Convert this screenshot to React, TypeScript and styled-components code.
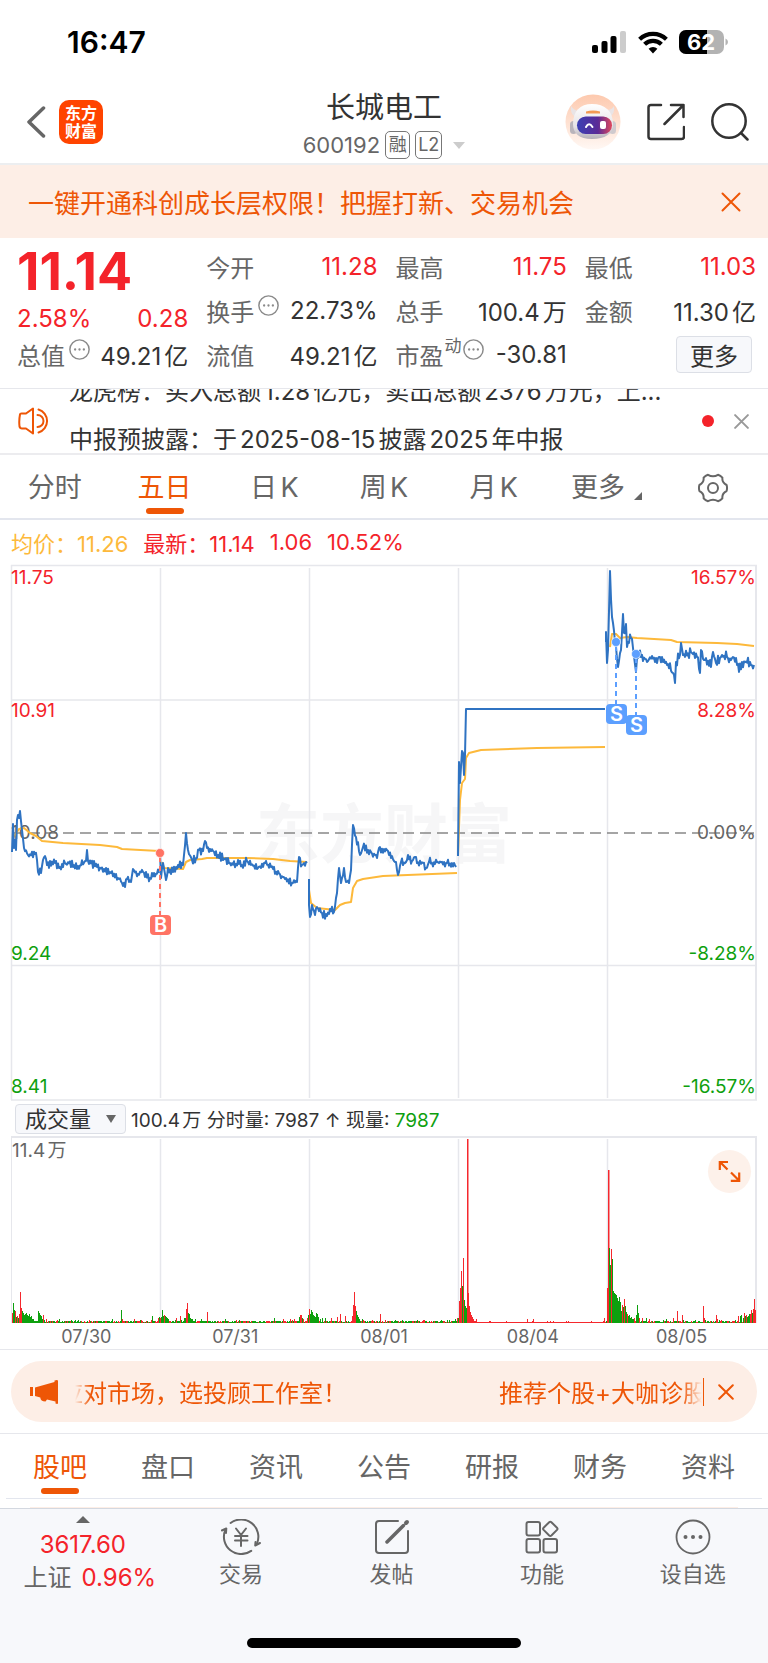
import React from 'react';
import styled, { createGlobalStyle } from 'styled-components';

const RED = '#f4232a';
const GREEN = '#0ea00e';
const ORANGE = '#ee5606';
const PEACH = '#fdeee6';
const INK = '#333333';
const GREY = '#666666';
const LINE = '#e6e7ec';
const BLUE = '#2f73c2';
const YELLOW = '#fdb93b';

const GlobalStyle = createGlobalStyle`
  * { box-sizing: border-box; }
  body {
    margin: 0;
    background: #fff;
    color: ${INK};
    font-family: Inter, "Noto Sans CJK SC", sans-serif;
    font-size: 24px;
    text-autospace: normal;
  }
  button, select { font: inherit; color: inherit; }
  button {
    display: flex;
    align-items: center;
    justify-content: center;
    padding: 0;
    border: 0;
    background: none;
    cursor: pointer;
  }
  a { color: inherit; text-decoration: none; }
  svg { display: block; flex: none; }
`;

const Page = styled.div`
  display: flex;
  flex-direction: column;
  min-height: 100vh;
`;

/* ---------- status bar and header ---------- */

const StatusBar = styled.div`
  display: flex;
  align-items: center;
  justify-content: space-between;
  height: 80px;
  padding: 4px 39px 0 67px;
`;

const Clock = styled.time`
  color: #000;
  font-size: 30px;
  font-weight: 600;
`;

const StatusIcons = styled.div`
  display: flex;
  align-items: center;
  gap: 11px;
`;

const Header = styled.header`
  display: grid;
  grid-template-columns: 1fr auto 1fr;
  align-items: center;
  height: 85px;
  padding: 0 19px;
  border-bottom: 2px solid #eceef0;
`;

const HeaderSide = styled.div<{ $end?: boolean }>`
  display: flex;
  align-items: center;
  justify-content: ${(p) => (p.$end ? 'flex-end' : 'flex-start')};
  gap: ${(p) => (p.$end ? '26px' : '13px')};
  padding-left: ${(p) => (p.$end ? '0' : '7px')};
`;

const Logo = styled.a`
  display: grid;
  place-content: center;
  width: 44px;
  height: 44px;
  border-radius: 10px;
  background: #ff4400;
  color: #fff;
  font-size: 16px;
  font-weight: 700;
  line-height: 18px;
  text-align: center;
`;

const TitleBlock = styled.div`
  display: flex;
  flex-direction: column;
  align-items: center;
  padding-top: 7px;
`;

const Title = styled.h1`
  margin: 0;
  font-size: 29px;
  font-weight: 400;
  line-height: 40px;
`;

const CodeLine = styled.div`
  display: flex;
  align-items: center;
  gap: 5px;
  height: 35px;
  color: ${GREY};
  font-size: 22px;
`;

const Tag = styled.span`
  display: grid;
  place-content: center;
  min-width: 25px;
  height: 28px;
  padding: 0 2px;
  border: 1px solid #777;
  border-radius: 5px;
  font-size: 18px;
  line-height: 26px;
`;

const CodeArrow = styled.span`
  width: 0;
  margin-left: 6px;
  border: 6px solid transparent;
  border-top: 7px solid #ccc;
  border-bottom: 0;
`;

/* ---------- banner ---------- */

const Banner = styled.section`
  display: flex;
  align-items: center;
  justify-content: space-between;
  height: 73px;
  padding: 0 27px 0 28px;
  background: ${PEACH};
  color: ${ORANGE};
  font-size: 26px;
`;

/* ---------- quote figures ---------- */

const Quote = styled.section`
  display: grid;
  grid-template-columns: repeat(4, 1fr);
  gap: 18px;
  padding: 6px 12px 12px 17px;
  border-bottom: 1px solid ${LINE};
`;

const QuoteColumn = styled.div`
  display: flex;
  flex-direction: column;
`;

const Price = styled.strong`
  height: 60px;
  color: ${RED};
  font-size: 52px;
  font-weight: 700;
  line-height: 56px;
`;

const Change = styled.div`
  display: flex;
  align-items: center;
  justify-content: space-between;
  height: 28px;
  color: ${RED};
`;

const StatRow = styled.div`
  display: flex;
  align-items: center;
  height: 44px;
  white-space: nowrap;
`;

const StatLabel = styled.span`
  color: ${GREY};
`;

const StatValue = styled.span<{ $up?: boolean }>`
  margin-left: auto;
  color: ${(p) => (p.$up ? RED : INK)};
`;

const Sup = styled.sup`
  align-self: flex-start;
  margin: 4px 1px 0;
  color: ${GREY};
  font-size: 17px;
  line-height: 20px;
`;

const Hint = styled.button`
  align-self: flex-start;
  margin: 7px 0 0 4px;
  ${Sup} + & { margin-left: 0; }
`;

const MoreButton = styled.button`
  width: 76px;
  height: 37px;
  margin: 0 4px 0 auto;
  border: 1px solid #dcdfe6;
  border-radius: 4px;
  background: #f7f8fb;
`;

/* ---------- news ticker ---------- */

const News = styled.section`
  display: flex;
  align-items: center;
  height: 66px;
  padding: 0 19px 0 18px;
  border-bottom: 2px solid #ececef;
`;

const NewsWindow = styled.div`
  flex: 1;
  height: 64px;
  margin: 0 18px;
  overflow: hidden;
`;

const NewsList = styled.div`
  margin-top: -21px;
`;

const NewsItem = styled.a`
  display: block;
  line-height: 48px;
  white-space: nowrap;
`;

const Dot = styled.span`
  width: 12px;
  height: 12px;
  margin-right: 20px;
  border-radius: 50%;
  background: ${RED};
`;

/* ---------- tabs ---------- */

const Tabs = styled.nav<{ $inset?: boolean }>`
  display: grid;
  grid-template-columns: repeat(7, 1fr);
  height: 65px;
  margin: 0 ${(p) => (p.$inset ? '6px' : '0')};
  border-bottom: ${(p) => (p.$inset ? '1px' : '2px')} solid #e3e6ee;
`;

const Tab = styled.button<{ $active?: boolean }>`
  position: relative;
  padding-top: 3px;
  color: ${(p) => (p.$active ? ORANGE : GREY)};
  font-size: 27px;
  line-height: 40px;
  &::after {
    content: "";
    display: ${(p) => (p.$active ? 'block' : 'none')};
    position: absolute;
    bottom: 4px;
    left: 50%;
    width: 38px;
    height: 6px;
    margin-left: -19px;
    border-radius: 3px;
    background: ${ORANGE};
  }
`;

const Corner = styled.span`
  align-self: flex-end;
  margin: 0 -6px 18px 9px;
  border-left: 8px solid transparent;
  border-bottom: 8px solid ${GREY};
`;

/* ---------- charts ---------- */

const Legend = styled.div`
  display: flex;
  align-items: center;
  gap: 15px;
  height: 44px;
  padding: 0 11px;
  color: ${RED};
  font-size: 22px;
`;

const Average = styled.span`
  color: ${YELLOW};
`;

const ChartSvg = styled.svg`
  width: 100%;
  height: auto;
  font-size: 19px;
`;

const VolumeBar = styled.div`
  display: flex;
  align-items: center;
  gap: 5px;
  height: 35px;
  padding-left: 15px;
  font-size: 19px;
  white-space: nowrap;
`;

const SelectBox = styled.label`
  position: relative;
  &::after {
    content: "";
    position: absolute;
    top: 11px;
    right: 10px;
    border: 5px solid transparent;
    border-top: 8px solid ${GREY};
    border-bottom: 0;
    pointer-events: none;
  }
`;

const Select = styled.select`
  display: block;
  appearance: none;
  width: 111px;
  height: 30px;
  padding: 0 0 0 9px;
  border: 1px solid #dcdfe6;
  border-radius: 4px;
  background: #f7f8fb;
  font-size: 22px;
  line-height: 28px;
`;

const Down = styled.span`
  color: ${GREEN};
`;

const VolumeChart = styled.div`
  position: relative;
`;

const Expand = styled.button`
  position: absolute;
  top: 14px;
  right: 17px;
  width: 43px;
  height: 43px;
  border-radius: 50%;
  background: #fdf1ea;
`;

const Dates = styled.div`
  display: grid;
  grid-template-columns: repeat(5, 1fr);
  height: 27px;
  padding: 0 12px;
  border-bottom: 1px solid ${LINE};
  color: ${GREY};
  font-size: 18px;
  line-height: 28px;
  text-align: center;
`;

/* ---------- promotion strip ---------- */

const PromoWrap = styled.section`
  padding: 11px;
  border-bottom: 1px solid ${LINE};
`;

const Promo = styled.div`
  display: flex;
  align-items: center;
  height: 61px;
  padding: 0 23px 0 19px;
  border-radius: 31px;
  background: ${PEACH};
  color: ${ORANGE};
`;

const Marquee = styled.div`
  display: flex;
  flex: 1;
  justify-content: space-between;
  margin-left: 17px;
  overflow: hidden;
  white-space: nowrap;
  mask-image: linear-gradient(90deg, transparent, #000 16px, #000 calc(100% - 20px), transparent);
`;

const MarqueeItem = styled.a<{ $edge: 'start' | 'end' }>`
  margin-left: ${(p) => (p.$edge === 'start' ? '-16px' : '0')};
  margin-right: ${(p) => (p.$edge === 'end' ? '-5px' : '0')};
`;

const Divider = styled.span`
  width: 1px;
  height: 28px;
  margin: 0 14px 0 1px;
  background: ${ORANGE};
`;

/* ---------- bottom bar ---------- */

const FeedPeek = styled.div`
  height: 1px;
  margin: 8px 30px 0;
  background: ${PEACH};
`;

const BottomBar = styled.footer`
  flex: 1;
  border-top: 1px solid #d3d8e0;
  background: #f7f8fb;
`;

const BottomNav = styled.nav`
  display: grid;
  grid-template-columns: 11fr repeat(4, 10fr);
  height: 129px;
`;

const NavItem = styled.a`
  display: flex;
  flex-direction: column;
  align-items: center;
  padding-top: 10px;
  color: ${GREY};
  font-size: 22px;
  line-height: 32px;
`;

const NavLabel = styled.span`
  margin-top: 3px;
`;

const IndexItem = styled.a`
  display: flex;
  flex-direction: column;
  align-items: center;
  padding-top: 7px;
  color: ${GREY};
  line-height: 33px;
`;

const IndexArrow = styled.span`
  width: 0;
  margin-bottom: 5px;
  border: 7px solid transparent;
  border-bottom: 7px solid ${GREY};
  border-top: 0;
`;

const IndexLine = styled.span`
  display: flex;
  gap: 10px;
  padding-left: 14px;
`;

const Rise = styled.span`
  color: ${RED};
`;

const HomeIndicator = styled.div`
  width: 274px;
  height: 10px;
  margin: 0 auto 16px;
  border-radius: 5px;
  background: #000;
`;

/* ---------- icons ---------- */

const Cross = ({ size, color }: { size: number; color: string }) => (
  <svg width={size} height={size} viewBox="0 0 20 20" stroke={color} strokeWidth={(2 * 20) / size} strokeLinecap="round">
    <path d="M1.5 1.5 18.5 18.5M18.5 1.5 1.5 18.5" />
  </svg>
);

const Signal = () => (
  <svg width="35" height="23" viewBox="0 0 35 23">
    <rect x="0" y="14" width="6" height="8" rx="2" />
    <rect x="9.500" y="10" width="6" height="12" rx="2" />
    <rect x="18.500" y="5" width="6" height="17" rx="2" />
    <rect x="28" y="0" width="6" height="22" rx="2" fill="#ccc" />
  </svg>
);

const Wifi = () => (
  <svg width="30" height="23" viewBox="0 0 30 23" fill="none" stroke="#000" strokeWidth="4.200">
    <path d="M1.600 8.200A19.500 19.500 0 0 1 28.400 8.200" />
    <path d="M6.600 13.300A12 12 0 0 1 23.400 13.300" />
    <path d="M15 22.500 10.600 17.800A6.500 6.500 0 0 1 19.400 17.800Z" fill="#000" stroke="none" />
  </svg>
);

const Battery = () => (
  <svg width="50" height="25" viewBox="0 0 50 25" role="img" aria-label="62%">
    <rect x="0" y="0" width="45" height="24" rx="7" fill="#b3b3b3" />
    <path d="M7 0H28V24H7A7 7 0 0 1 0 17V7A7 7 0 0 1 7 0Z" />
    <path d="M46.500 8.500Q49 9.500 49 12T46.500 15.500Z" fill="#b3b3b3" />
    <text x="22" y="20" fill="#fff" fontSize="22" fontWeight="700" textAnchor="middle">62</text>
  </svg>
);

const Back = () => (
  <svg width="20" height="32" viewBox="0 0 20 32" fill="none" stroke={GREY} strokeWidth="3.500" strokeLinecap="round" strokeLinejoin="round">
    <path d="M17.500 2 3 16 17.500 30" />
  </svg>
);

const Robot = () => (
  <svg width="56" height="56" viewBox="0 0 56 56">
    <defs>
      <linearGradient id="halo" x2="0" y2="1">
        <stop offset="0" stopColor="#fdc9ae" />
        <stop offset="1" stopColor="#fff8f4" />
      </linearGradient>
      <linearGradient id="visor">
        <stop offset="0" stopColor="#3b40b4" />
        <stop offset="0.600" stopColor="#5b2a96" />
        <stop offset="1" stopColor="#e0485c" />
      </linearGradient>
      <linearGradient id="shell" x2="0" y2="1">
        <stop offset="0" stopColor="#ffffff" />
        <stop offset="0.650" stopColor="#e6e3e6" />
        <stop offset="1" stopColor="#b5b0b8" />
      </linearGradient>
    </defs>
    <circle cx="28" cy="28" r="27.500" fill="url(#halo)" />
    <path d="M6 12C5 18 8 23 13 24L18 16C12 18 9 16 6 12ZM49 12C50 18 47 23 42 24L37 15C43 17 47 16 49 12Z" fill="#e9e4e6" />
    <rect x="5" y="27" width="7" height="13" rx="3.500" fill="#b9b4bb" />
    <rect x="44" y="27" width="7" height="13" rx="3.500" fill="#cfcace" />
    <path d="M27 10C40 10 48 17 48 30C48 40 40 45 27 45C14 45 8 39 8 30C8 17 15 10 27 10Z" fill="url(#shell)" />
    <path d="M21 17.500Q28 15.500 35 17.500V19.500H21Z" fill="#f39a55" />
    <rect x="12" y="22.500" width="35" height="17.500" rx="8.700" fill="url(#visor)" />
    <path d="M21 33Q24 27.500 27.500 33" fill="none" stroke="#fff" strokeWidth="2" strokeLinecap="round" />
    <rect x="35" y="27" width="6" height="8" rx="2" fill="#fff" />
  </svg>
);

const Share = () => (
  <svg width="38" height="38" viewBox="0 0 38 38" fill="none" stroke={INK} strokeWidth="2.500" strokeLinecap="round" strokeLinejoin="round">
    <path d="M14 2H4Q1.500 2 1.500 4.500V33.500Q1.500 36 4 36H34.500Q37 36 37 33.500V24M24 2H36.500V14M36.500 2 17.500 21" />
  </svg>
);

const Search = () => (
  <svg width="38" height="38" viewBox="0 0 38 38" fill="none" stroke={INK} strokeWidth="2.500" strokeLinecap="round">
    <circle cx="18" cy="18" r="16.700" />
    <path d="M30 30 36.500 36.500" />
  </svg>
);

const Ellipsis = ({ size, width, color = GREY }: { size: number; width: number; color?: string }) => (
  <svg width={size} height={size} viewBox="0 0 36 36" fill={color}>
    <circle cx="18" cy="18" r="16.500" fill="none" stroke={color} strokeWidth={width} />
    <circle cx="10.500" cy="18" r="2" />
    <circle cx="18" cy="18" r="2" />
    <circle cx="25.500" cy="18" r="2" />
  </svg>
);

const Speaker = () => (
  <svg width="33" height="28" viewBox="0 0 33 28" fill="none" stroke={ORANGE} strokeWidth="2" strokeLinecap="round" strokeLinejoin="round">
    <path d="M2 7.500Q2 6.500 3.500 6.500H8L15 1.500V26.500L8 21.500H4Q2 21.500 1.500 19.500Q.8 13.500 2 7.500Z" />
    <path d="M20.500 2.500A12 12 0 0 1 20.500 25.500M19.500 8A6 6 0 0 1 19.500 20" />
  </svg>
);

const Gear = () => (
  <svg width="30" height="30" viewBox="0 0 30 30" fill="none" stroke={GREY} strokeWidth="2" strokeLinejoin="round">
    <path d="M10 1.800Q15 4.800 20 1.800Q22.500 2.600 24.400 4.700Q23.800 9.500 28.600 12Q29.500 15 28.600 18Q23.800 20.500 24.400 25.300Q22.500 27.400 20 28.200Q15 25.200 10 28.200Q7.500 27.400 5.600 25.300Q6.200 20.500 1.400 18Q.5 15 1.400 12Q6.200 9.500 5.600 4.700Q7.500 2.600 10 1.800Z" />
    <circle cx="15" cy="15" r="5" />
  </svg>
);

const ExpandArrows = () => (
  <svg width="23" height="23" viewBox="0 0 23 23" fill="none" stroke={ORANGE} strokeWidth="2.200">
    <path d="M1.800 10V2H10M2 2 9.500 9.500M21.200 12.500V20.800H12.800M21 20.500 13 12.500" />
  </svg>
);

const Megaphone = () => (
  <svg width="28" height="26" viewBox="0 0 28 26" fill={ORANGE}>
    <path d="M0 8H3V17H0ZM5 8.500 24.500 3V1.500Q28 .2 28 2V24Q28 25.500 25.500 24.500V22.500L17 20.500L15.500 22.500Q10.500 22.500 10.300 18.500L5 17Z" />
  </svg>
);

const Trade = () => (
  <svg width="40" height="36" viewBox="0 0 40 36" fill="none" stroke={GREY} strokeWidth="2" strokeLinecap="round" strokeLinejoin="round">
    <path d="M9.600 4A17.300 17.300 0 0 1 36 24.500M30.200 31.900A17.300 17.300 0 0 1 4.300 11" />
    <path d="M.8 11.500 5.300 9.500 5 14M34.500 23 34.200 26.500 39 24" />
    <path d="M15 9.500 20 16 25 9.500M14 17H26.500M14 21.500H26.500M20 16V27" />
  </svg>
);

const Post = () => (
  <svg width="36" height="36" viewBox="0 0 36 36" fill="none" stroke={GREY} strokeWidth="2" strokeLinecap="round">
    <path d="M24 2H5Q2 2 2 5V31Q2 34 5 34H31Q34 34 34 31V12" />
    <path d="M13 23 29.500 6.500" strokeWidth="3.500" />
    <path d="M32 4 33 3" strokeWidth="4" />
  </svg>
);

const Apps = () => (
  <svg width="36" height="36" viewBox="0 0 36 36" fill="none" stroke={GREY} strokeWidth="2" strokeLinejoin="round">
    <rect x="2.500" y="3" width="13.500" height="13.500" rx="2" />
    <rect x="2.500" y="20" width="13.500" height="13.500" rx="2" />
    <rect x="19.500" y="20" width="13.500" height="13.500" rx="2" />
    <path d="M25.200 3.200Q26.300 2.200 27.400 3.200L33 8.700Q34 9.800 33 10.900L27.400 16.500Q26.300 17.500 25.200 16.500L19.600 10.900Q18.600 9.800 19.600 8.700Z" />
  </svg>
);

/* ---------- chart data ---------- */

type Point = [number, number];

const priceDays: { jitter: number; points: Point[] }[] = [
  {
    jitter: 5,
    points: [[12, 852], [13, 824], [14, 848], [15, 840], [16, 850], [17, 820], [18, 815], [19, 818], [20, 811], [22, 830], [24, 848], [28, 855], [35, 854], [37, 860], [38, 872], [41, 873], [43, 860], [45, 856], [47, 865], [55, 863], [60, 867], [65, 863], [78, 866], [86, 861], [87, 850], [88, 861], [97, 867], [110, 872], [118, 878], [122, 883], [125, 887], [127, 879], [131, 882], [133, 869], [138, 874], [143, 872], [150, 878], [159, 873]],
  },
  {
    jitter: 5,
    points: [[160, 853], [161, 878], [163, 863], [166, 880], [168, 868], [173, 872], [178, 865], [183, 865], [186, 833], [188, 850], [192, 860], [197, 858], [199, 850], [203, 851], [205, 841], [207, 848], [213, 851], [218, 855], [230, 863], [242, 865], [247, 861], [258, 868], [265, 863], [273, 869], [283, 877], [293, 883], [297, 882], [299, 857], [302, 865], [307, 863]],
  },
  {
    jitter: 5,
    points: [[309, 879], [309, 905], [310, 917], [312, 905], [315, 915], [317, 907], [322, 913], [327, 916], [330, 909], [334, 912], [337, 893], [339, 868], [341, 883], [344, 868], [346, 882], [349, 883], [351, 870], [353, 825], [356, 837], [360, 855], [363, 847], [368, 850], [375, 855], [377, 858], [379, 848], [384, 849], [387, 850], [391, 858], [396, 862], [398, 875], [401, 862], [406, 862], [408, 855], [412, 861], [415, 857], [417, 863], [423, 863], [426, 868], [429, 862], [446, 863], [454, 863], [456, 867]],
  },
  {
    jitter: 0,
    points: [[458, 856], [459, 762], [460, 783], [462, 751], [463, 753], [464, 775], [465, 755], [466, 709], [605, 709]],
  },
  {
    jitter: 7,
    points: [[606, 642], [606, 632], [607, 663], [608, 650], [610, 571], [612, 617], [613, 623], [615, 642], [618, 667], [621, 650], [623, 614], [624, 633], [626, 624], [627, 647], [631, 638], [633, 648], [636, 672], [637, 658], [642, 655], [647, 662], [652, 656], [656, 658], [662, 657], [667, 665], [673, 673], [675, 683], [676, 662], [680, 655], [681, 643], [683, 655], [692, 653], [697, 657], [700, 673], [701, 650], [704, 660], [711, 667], [713, 652], [716, 663], [721, 657], [736, 658], [739, 672], [742, 662], [754, 665]],
  },
];

const averageDays: Point[][] = [
  [[13, 838], [19, 829], [24, 828], [30, 833], [36, 836], [42, 841], [63, 843], [100, 845], [117, 847], [122, 849], [159, 851]],
  [[162, 862], [164, 868], [183, 869], [186, 862], [190, 860], [202, 859], [207, 858], [247, 858], [273, 859], [290, 861], [307, 862]],
  [[309, 890], [311, 903], [317, 908], [335, 910], [340, 905], [345, 903], [351, 902], [353, 888], [357, 881], [363, 879], [383, 876], [457, 873]],
  [[458, 855], [460, 800], [462, 783], [465, 779], [466, 758], [469, 753], [481, 750], [537, 748], [605, 747]],
  [[610, 647], [612, 634], [616, 634], [620, 638], [627, 637], [637, 638], [671, 640], [677, 642], [717, 643], [737, 644], [754, 646]],
];

/* repeatable pseudo-random value between 0 and 1 */
const noise = (n: number) => {
  const v = Math.sin(n * 127.1) * 43758.5453;
  return v - Math.floor(v);
};

const toPath = (points: Point[]) => 'M' + points.map(([x, y]) => `${x} ${y.toFixed(1)}`).join('L');

/* fills the gaps between turning points with minute-by-minute jitter */
const withJitter = (points: Point[], jitter: number) => {
  if (!jitter) return points;
  const out: Point[] = [];
  points.forEach(([x, y], i) => {
    out.push([x, y]);
    const next = points[i + 1];
    if (!next) return;
    for (let px = x + 1; px < next[0]; px += 1) {
      const t = (px - x) / (next[0] - x);
      const sway = (noise(px) - 0.5) * jitter + (px % 2 ? 1 : -1) * jitter * 0.35;
      out.push([px, y + (next[1] - y) * t + sway]);
    }
  });
  return out;
};

type Bar = [number, number, 'r' | 'g'];

const spikes: Bar[] = [
  [12, 10, 'r'], [13, 20, 'g'], [14, 13, 'g'], [15, 12, 'r'], [16, 6, 'g'], [17, 7, 'r'], [18, 5, 'g'], [19, 9, 'r'], [20, 31, 'r'], [21, 15, 'r'], [22, 12, 'g'], [23, 10, 'g'], [24, 8, 'g'], [25, 9, 'g'], [26, 10, 'g'], [27, 8, 'g'], [28, 7, 'g'], [29, 9, 'g'], [30, 6, 'g'], [31, 7, 'g'], [32, 4, 'g'], [33, 4, 'g'],
  [38, 12, 'g'], [39, 10, 'g'], [40, 8, 'g'], [41, 7, 'g'], [42, 4, 'g'], [43, 8, 'r'], [44, 3, 'g'], [46, 4, 'r'], [59, 4, 'g'], [89, 3, 'r'], [112, 4, 'g'], [121, 13, 'g'], [122, 4, 'r'], [134, 4, 'r'], [152, 7, 'g'],
  [158, 5, 'r'], [159, 6, 'g'], [160, 5, 'r'], [161, 6, 'g'], [162, 13, 'g'], [163, 7, 'g'], [164, 8, 'r'], [165, 7, 'g'], [166, 6, 'g'], [167, 5, 'g'], [168, 4, 'g'], [176, 5, 'r'], [180, 7, 'r'], [184, 5, 'g'], [185, 5, 'g'], [186, 14, 'r'], [187, 20, 'r'], [188, 10, 'g'], [189, 9, 'g'], [190, 5, 'g'], [191, 4, 'g'], [192, 4, 'g'], [195, 4, 'g'], [201, 4, 'g'], [207, 11, 'r'], [225, 4, 'g'], [236, 3, 'r'], [274, 5, 'g'], [283, 4, 'r'], [290, 4, 'r'], [294, 4, 'r'],
  [299, 6, 'g'], [300, 8, 'r'], [301, 8, 'r'], [302, 5, 'g'], [303, 4, 'r'], [307, 5, 'r'], [308, 8, 'g'], [309, 14, 'r'], [310, 9, 'g'], [311, 13, 'g'], [312, 11, 'g'], [313, 8, 'g'], [314, 7, 'g'], [315, 6, 'g'], [316, 10, 'g'], [317, 9, 'g'], [318, 6, 'g'], [320, 4, 'g'], [322, 5, 'g'], [325, 5, 'g'], [331, 5, 'r'], [337, 6, 'r'], [340, 9, 'r'], [345, 7, 'r'],
  [352, 7, 'r'], [353, 18, 'r'], [354, 31, 'r'], [355, 17, 'r'], [356, 12, 'g'], [357, 8, 'g'], [358, 6, 'g'], [359, 4, 'g'], [362, 4, 'g'], [380, 9, 'r'], [394, 2, 'g'], [417, 3, 'g'], [449, 3, 'g'], [455, 4, 'g'], [457, 5, 'r'],
  [458, 5, 'g'], [459, 22, 'r'], [460, 35, 'r'], [461, 52, 'r'], [462, 37, 'g'], [463, 65, 'r'], [464, 23, 'g'], [465, 17, 'g'], [466, 15, 'g'], [467, 184, 'r'], [468, 30, 'r'], [469, 17, 'r'], [470, 11, 'r'], [471, 8, 'r'], [472, 6, 'r'], [473, 4, 'r'], [476, 4, 'r'], [527, 4, 'r'], [533, 4, 'r'], [604, 5, 'r'],
  [607, 35, 'r'], [608, 153, 'r'], [609, 75, 'g'], [610, 58, 'g'], [611, 74, 'r'], [612, 64, 'g'], [613, 32, 'g'], [614, 30, 'g'], [615, 29, 'g'], [616, 28, 'g'], [617, 25, 'g'], [618, 22, 'g'], [619, 26, 'g'], [620, 21, 'g'], [621, 12, 'g'], [622, 18, 'r'], [623, 16, 'g'], [624, 24, 'r'], [625, 17, 'g'], [626, 11, 'g'], [627, 9, 'r'], [628, 7, 'g'], [629, 8, 'g'], [630, 5, 'g'], [631, 6, 'g'], [632, 4, 'g'], [633, 4, 'g'], [634, 5, 'r'], [636, 8, 'g'], [637, 18, 'g'], [638, 10, 'g'], [639, 5, 'r'],
  [642, 5, 'r'], [646, 5, 'g'], [649, 4, 'r'], [666, 4, 'g'], [673, 5, 'r'], [677, 12, 'r'], [682, 8, 'r'], [703, 17, 'r'], [704, 5, 'r'], [716, 8, 'r'], [717, 4, 'r'], [735, 3, 'g'], [738, 7, 'r'], [740, 7, 'g'], [741, 8, 'g'], [743, 5, 'g'], [744, 10, 'r'], [745, 7, 'g'], [746, 8, 'r'], [747, 6, 'g'], [748, 7, 'g'], [749, 9, 'g'], [750, 9, 'r'], [751, 13, 'r'], [752, 10, 'g'], [753, 14, 'r'], [754, 24, 'r'], [755, 13, 'r'],
];

/* thin background turnover between the spikes */
const quietBars: Bar[] = Array.from({ length: 744 }, (_, i): Bar => {
  const x = 12 + i;
  if (x > 476 && x < 606) return [x, noise(x) > 0.85 ? 2 : 1, 'r'];
  return [x, 1 + Math.round(noise(x + 9) * 1.6), noise(x * 3) > 0.62 ? 'r' : 'g'];
});

const days = ['07/30', '07/31', '08/01', '08/04', '08/05'];
const dayLines = [160, 309, 458, 607];

const axisLabels: [number, string, string, string][] = [
  [584, '11.75', '16.57%', RED],
  [717, '10.91', '8.28%', RED],
  [839, '10.08', '0.00%', GREY],
  [960, '9.24', '-8.28%', GREEN],
  [1093, '8.41', '-16.57%', GREEN],
];

const Marker = ({ x, dotY, boxY, letter, color }: { x: number; dotY: number; boxY: number; letter: string; color: string }) => (
  <g>
    <path d={`M${x} ${dotY + 4}V${boxY}`} stroke={color} strokeWidth="2" strokeDasharray="5 4" />
    <circle cx={x} cy={dotY} r="4.500" fill={color} stroke="#fff" strokeWidth="0.600" />
    <rect x={x - 10} y={boxY} width="21" height="20" rx="4" fill={color} />
    <text x={x + 0.5} y={boxY + 17} fill="#fff" fontSize="20" fontWeight="600" textAnchor="middle">{letter}</text>
  </g>
);

const PriceChart = () => (
  <ChartSvg viewBox="0 564 768 537" role="img" aria-label="五日走势">
    <text x="384" y="857" fill="#f6f6f7" fontSize="64" fontWeight="700" textAnchor="middle">东方财富</text>
    <g stroke={LINE} strokeWidth="1.500" fill="none">
      <path d="M11 565.500H757M11 1100H757M11.500 565V1100" />
      <path d="M756 565V1100" strokeWidth="2" />
      <path d="M12 700H756M12 965.500H756" />
      {dayLines.map((x) => <path key={x} d={`M${x + 0.5} 568V1098`} />)}
    </g>
    <path d="M12 833H756" stroke="#888" strokeWidth="1.500" strokeDasharray="11 6" />
    {axisLabels.map(([y, price, percent, color]) => (
      <g key={price} fill={color}>
        <text x="11" y={y}>{price}</text>
        <text x="756" y={y} textAnchor="end">{percent}</text>
      </g>
    ))}
    <g fill="none" strokeWidth="2" strokeLinejoin="round">
      {averageDays.map((day, i) => <path key={i} d={toPath(day)} stroke={YELLOW} />)}
      {priceDays.map((day, i) => <path key={i} d={toPath(withJitter(day.points, day.jitter))} stroke={BLUE} />)}
    </g>
    <Marker x={160} dotY={853} boxY={915} letter="B" color="#ff7364" />
    <Marker x={616} dotY={642} boxY={704} letter="S" color="#5c9fff" />
    <Marker x={636} dotY={654} boxY={715} letter="S" color="#5c9fff" />
  </ChartSvg>
);

const VolumeSvg = () => (
  <ChartSvg viewBox="0 1136 768 187" role="img" aria-label="成交量">
    <g stroke={LINE} fill="none">
      <path d="M11 1137H757M756 1136V1323" strokeWidth="2" />
      <path d="M11.500 1136V1323" />
      {dayLines.map((x) => <path key={x} d={`M${x + 0.5} 1139V1323`} strokeWidth="1.500" />)}
    </g>
    <text x="12" y="1157" fill={GREY}>11.4万</text>
    {[...quietBars, ...spikes].map(([x, h, tone], i) => (
      <rect key={i} x={x} y={1323 - h} width={h > 100 ? 1.5 : 1} height={h} fill={tone === 'r' ? '#f5282d' : '#0ea00e'} />
    ))}
  </ChartSvg>
);

/* ---------- page parts ---------- */

type StatProps = { label: string; value: string; up?: boolean; sup?: string; hint?: boolean };

const Stat = ({ label, value, up, sup, hint }: StatProps) => (
  <StatRow>
    <StatLabel>{label}</StatLabel>
    {sup && <Sup>{sup}</Sup>}
    {hint && <Hint aria-label={`${label}说明`}><Ellipsis size={21} width={2.5} color="#8a8a8a" /></Hint>}
    <StatValue $up={up}>{value}</StatValue>
  </StatRow>
);

const periods = ['分时', '五日', '日K', '周K', '月K'];
const sections = ['股吧', '盘口', '资讯', '公告', '研报', '财务', '资料'];
const navItems = [
  { label: '交易', icon: <Trade /> },
  { label: '发帖', icon: <Post /> },
  { label: '功能', icon: <Apps /> },
  { label: '设自选', icon: <Ellipsis size={36} width={1.8} /> },
];

export default function App() {
  return (
    <>
      <GlobalStyle />
      <Page>
        <StatusBar>
          <Clock>16:47</Clock>
          <StatusIcons><Signal /><Wifi /><Battery /></StatusIcons>
        </StatusBar>

        <Header>
          <HeaderSide>
            <button aria-label="返回"><Back /></button>
            <Logo href="#">东方<br />财富</Logo>
          </HeaderSide>
          <TitleBlock>
            <Title>长城电工</Title>
            <CodeLine>600192 <Tag>融</Tag><Tag>L2</Tag><CodeArrow /></CodeLine>
          </TitleBlock>
          <HeaderSide $end>
            <button aria-label="智能助手"><Robot /></button>
            <button aria-label="分享"><Share /></button>
            <button aria-label="搜索"><Search /></button>
          </HeaderSide>
        </Header>

        <Banner>
          <a href="#">一键开通科创成长层权限！把握打新、交易机会</a>
          <button aria-label="关闭"><Cross size={20} color={ORANGE} /></button>
        </Banner>

        <Quote>
          <QuoteColumn>
            <Price>11.14</Price>
            <Change><span>2.58%</span><span>0.28</span></Change>
            <Stat label="总值" value="49.21亿" hint />
          </QuoteColumn>
          <QuoteColumn>
            <Stat label="今开" value="11.28" up />
            <Stat label="换手" value="22.73%" hint />
            <Stat label="流值" value="49.21亿" />
          </QuoteColumn>
          <QuoteColumn>
            <Stat label="最高" value="11.75" up />
            <Stat label="总手" value="100.4万" />
            <Stat label="市盈" value="-30.81" sup="动" hint />
          </QuoteColumn>
          <QuoteColumn>
            <Stat label="最低" value="11.03" up />
            <Stat label="金额" value="11.30亿" />
            <StatRow><MoreButton>更多</MoreButton></StatRow>
          </QuoteColumn>
        </Quote>

        <News>
          <Speaker />
          <NewsWindow>
            <NewsList>
              <NewsItem href="#">龙虎榜：买入总额1.28亿元，卖出总额2376万元，上...</NewsItem>
              <NewsItem href="#">中报预披露：于2025-08-15披露2025年中报</NewsItem>
            </NewsList>
          </NewsWindow>
          <Dot />
          <button aria-label="关闭公告"><Cross size={15} color="#999" /></button>
        </News>

        <Tabs>
          {periods.map((name) => <Tab key={name} $active={name === '五日'}>{name}</Tab>)}
          <Tab>更多<Corner /></Tab>
          <Tab aria-label="设置"><Gear /></Tab>
        </Tabs>

        <Legend>
          <Average>均价：11.26</Average>
          <span>最新：11.14</span>
          <span>1.06</span>
          <span>10.52%</span>
        </Legend>
        <PriceChart />

        <VolumeBar>
          <SelectBox>
            <Select aria-label="指标"><option>成交量</option></Select>
          </SelectBox>
          <span>100.4万 分时量: 7987 ↑ 现量: <Down>7987</Down></span>
        </VolumeBar>
        <VolumeChart>
          <VolumeSvg />
          <Expand aria-label="全屏"><ExpandArrows /></Expand>
        </VolumeChart>
        <Dates>
          {days.map((day) => <time key={day}>{day}</time>)}
        </Dates>

        <PromoWrap>
          <Promo>
            <Megaphone />
            <Marquee>
              <MarqueeItem href="#" $edge="start">应对市场，选投顾工作室！</MarqueeItem>
              <MarqueeItem href="#" $edge="end">推荐个股+大咖诊股</MarqueeItem>
            </Marquee>
            <Divider />
            <button aria-label="关闭推广"><Cross size={16} color={ORANGE} /></button>
          </Promo>
        </PromoWrap>

        <Tabs $inset>
          {sections.map((name) => <Tab key={name} $active={name === '股吧'}>{name}</Tab>)}
        </Tabs>
        <FeedPeek />

        <BottomBar>
          <BottomNav>
            <IndexItem href="#">
              <IndexArrow />
              <Rise>3617.60</Rise>
              <IndexLine>上证 <Rise>0.96%</Rise></IndexLine>
            </IndexItem>
            {navItems.map((item) => (
              <NavItem key={item.label} href="#">
                {item.icon}
                <NavLabel>{item.label}</NavLabel>
              </NavItem>
            ))}
          </BottomNav>
          <HomeIndicator />
        </BottomBar>
      </Page>
    </>
  );
}
